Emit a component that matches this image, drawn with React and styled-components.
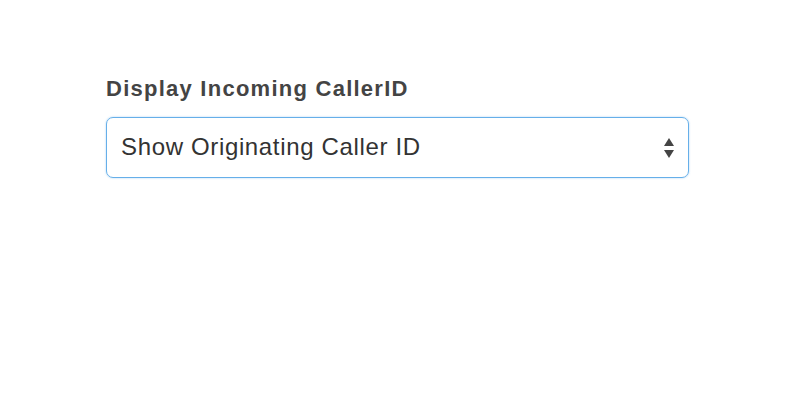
import React from 'react';
import styled, { createGlobalStyle } from 'styled-components';

const Global = createGlobalStyle`
    body {
        margin: 0;
        background: #ffffff;
        font-family: "Liberation Sans", Arial, sans-serif;
    }`;

const Page = styled.div`
    width: 800px;
    height: 406px;
    padding: 77px 0 0 106px;
    box-sizing: border-box;`;

const Field = styled.div`
    width: 583px;
    display: flex;
    flex-direction: column;
    gap: 16px;`;

const Label = styled.label`
    font-size: 22px;
    font-weight: bold;
    letter-spacing: 1.25px;
    color: #444444;
    line-height: 24px;`;

const Box = styled.div`
    height: 61px;
    box-sizing: border-box;
    border: 1px solid #66afe9;
    border-radius: 7px;
    box-shadow: 0 0 2px rgba(102, 175, 233, 0.6);
    display: flex;
    align-items: center;
    padding: 0 13px 2px 14px;`;

const Value = styled.span`
    flex: 1;
    font-size: 24px;
    letter-spacing: 0.65px;
    color: #333333;`;

const Arrows = styled.svg`
    width: 12px;
    height: 22px;
    margin-top: 2px;`;

export default function App() {
    return (
        <Page>
            <Global />
            <Field>
                <Label>Display Incoming CallerID</Label>
                <Box>
                    <Value>Show Originating Caller ID</Value>
                    <Arrows viewBox="0 0 12 22">
                        <path d="M6 1 L11 9 L1 9 Z" fill="#444" />
                        <path d="M6 21 L11 13 L1 13 Z" fill="#444" />
                    </Arrows>
                </Box>
            </Field>
        </Page>
    );
}
